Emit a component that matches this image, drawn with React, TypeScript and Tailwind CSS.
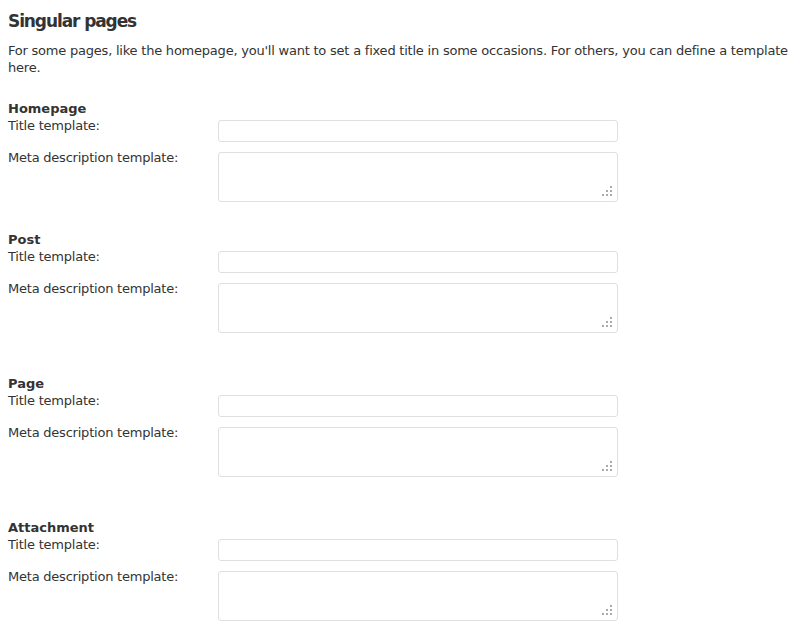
const sections = [
  { name: "Homepage", space: "mt-[24px]" },
  { name: "Post", space: "mt-[29px]" },
  { name: "Page", space: "mt-[42px]" },
  { name: "Attachment", space: "mt-[42px]" },
];

function ResizeGrip() {
  return (
    <svg className="absolute right-[6px] bottom-[6px]" width="10" height="10" viewBox="0 0 10 10">
      <rect x="8" y="0" width="2" height="2" fill="#aaa" />
      <rect x="4" y="4" width="2" height="2" fill="#aaa" />
      <rect x="8" y="4" width="2" height="2" fill="#aaa" />
      <rect x="0" y="8" width="2" height="2" fill="#aaa" />
      <rect x="4" y="8" width="2" height="2" fill="#aaa" />
      <rect x="8" y="8" width="2" height="2" fill="#aaa" />
    </svg>
  );
}

function Section({ name, space }: { name: string; space: string }) {
  return (
    <div className={space}>
      <div className="font-bold leading-[17px] tracking-normal">{name}</div>
      <div className="flex items-start">
        <label className="w-[210px] shrink-0 leading-[17px]">Title template:</label>
        <input
          type="text"
          className="mt-[3px] w-[400px] h-[22px] rounded-[3px] border border-[#dfdfdf] bg-white px-1 outline-none"
        />
      </div>
      <div className="flex items-start mt-[7px]">
        <label className="w-[210px] shrink-0 leading-[17px]">Meta description template:</label>
        <div className="relative mt-[3px]">
          <textarea className="block w-[400px] h-[50px] resize-none rounded-[3px] border border-[#dfdfdf] bg-white px-1 outline-none" />
          <ResizeGrip />
        </div>
      </div>
    </div>
  );
}

export default function App() {
  return (
    <div className="min-h-screen bg-white px-2 pt-[10px] text-[13px] tracking-[-0.22px] text-[#333] font-['DejaVu_Sans','Verdana',sans-serif]">
      <h2 className="text-[17px] font-bold leading-[22px] tracking-[-1.1px]">Singular pages</h2>
      <p className="mt-[10px] leading-[17px]">
        For some pages, like the homepage, you'll want to set a fixed title in some occasions. For others, you can define a
        template here.
      </p>
      {sections.map((s) => (
        <Section key={s.name} name={s.name} space={s.space} />
      ))}
    </div>
  );
}
